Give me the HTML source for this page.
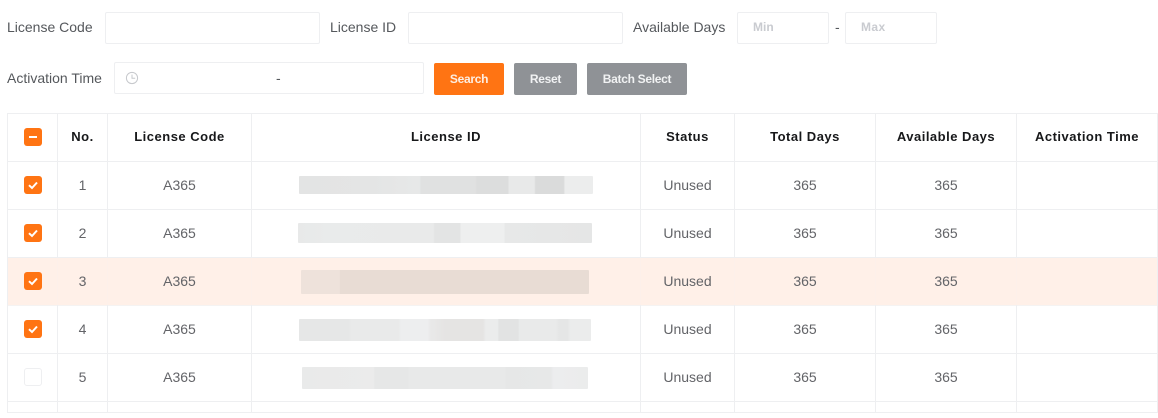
<!DOCTYPE html>
<html>
<head>
<meta charset="utf-8">
<style>
html,body{margin:0;padding:0;background:#fff;}
#p{position:relative;width:1158px;height:418px;overflow:hidden;font-family:"Liberation Sans",Arial,sans-serif;font-size:14px;color:#5f6266;background:#fff;}
#p div{position:absolute;box-sizing:border-box;}
.l{white-space:nowrap;line-height:20px;height:20px;color:#55585c;}
.i{border:1px solid #eeeff1;border-radius:2px;background:#fff;}
.b{border-radius:2px;font-size:12px;font-weight:bold;letter-spacing:-.3px;text-align:center;line-height:32px;height:32px;top:63px;background:#8f9296;color:#f1f2f3;}
.ph{color:#c9cbd0;font-size:12px;font-weight:bold;line-height:20px;white-space:nowrap;}
.h{background:#eeeff1;}
.th{top:127px;height:20px;line-height:20px;text-align:center;font-weight:bold;font-size:13px;letter-spacing:.5px;color:#17181a;white-space:nowrap;}
.td{height:20px;line-height:20px;text-align:center;color:#636468;white-space:nowrap;}
.cb{left:24px;width:18px;height:18px;border-radius:3px;background:#ff7413;}
.cb svg{position:absolute;left:0;top:0;}
.bar{border-radius:1px;}
</style>
</head>
<body>
<div id="p">
<div class="l" style="left:7px;top:17px;">License Code</div>
<div class="i" style="left:105px;top:12px;width:215px;height:32px;"></div>
<div class="l" style="left:330px;top:17px;">License ID</div>
<div class="i" style="left:408px;top:12px;width:215px;height:32px;"></div>
<div class="l" style="left:633px;top:17px;">Available Days</div>
<div class="i" style="left:737px;top:12px;width:92px;height:32px;"></div>
<div class="ph" style="left:753px;top:17px;">Min</div>
<div class="l" style="left:835px;top:17px;">-</div>
<div class="i" style="left:845px;top:12px;width:92px;height:32px;"></div>
<div class="ph" style="left:861px;top:17px;letter-spacing:.4px;">Max</div>

<div class="l" style="left:7px;top:68px;">Activation Time</div>
<div class="i" style="left:114px;top:62px;width:310px;height:32px;"></div>
<svg style="position:absolute;left:125px;top:71px;" width="14" height="14" viewBox="0 0 14 14" fill="none" stroke="#c6c8cc" stroke-width="1"><circle cx="7" cy="7" r="5.6"/><path d="M7 3.6V7.3H10.2"/></svg>
<div class="l" style="left:276px;top:68px;">-</div>
<div class="b" style="left:434px;width:70px;background:#ff7413;color:#fdeee2;">Search</div>
<div class="b" style="left:514px;width:63px;">Reset</div>
<div class="b" style="left:587px;width:100px;">Batch Select</div>

<!-- row highlight -->
<div style="left:8px;top:258px;width:1149px;height:47px;background:#fff0e8;"></div>

<!-- horizontal lines -->
<div class="h" style="left:7px;top:113px;width:1151px;height:1px;"></div>
<div class="h" style="left:7px;top:161px;width:1151px;height:1px;"></div>
<div class="h" style="left:7px;top:209px;width:1151px;height:1px;"></div>
<div class="h" style="left:7px;top:257px;width:1151px;height:1px;"></div>
<div class="h" style="left:7px;top:305px;width:1151px;height:1px;background:#f5f3f2;"></div>
<div class="h" style="left:7px;top:353px;width:1151px;height:1px;"></div>
<div class="h" style="left:7px;top:401px;width:1151px;height:1px;"></div>
<div class="h" style="left:7px;top:412px;width:1151px;height:1px;"></div>

<!-- vertical lines -->
<div class="h" style="left:7px;top:113px;width:1px;height:300px;"></div>
<div class="h" style="left:57px;top:113px;width:1px;height:300px;"></div>
<div class="h" style="left:107px;top:113px;width:1px;height:300px;"></div>
<div class="h" style="left:251px;top:113px;width:1px;height:300px;"></div>
<div class="h" style="left:640px;top:113px;width:1px;height:300px;"></div>
<div class="h" style="left:734px;top:113px;width:1px;height:300px;"></div>
<div class="h" style="left:875px;top:113px;width:1px;height:300px;"></div>
<div class="h" style="left:1016px;top:113px;width:1px;height:300px;"></div>
<div class="h" style="left:1157px;top:113px;width:1px;height:300px;"></div>
<!-- highlight column tint -->
<div style="left:57px;top:258px;width:1px;height:47px;background:#fdf0ea;"></div>
<div style="left:107px;top:258px;width:1px;height:47px;background:#fdf0ea;"></div>
<div style="left:251px;top:258px;width:1px;height:47px;background:#fdf0ea;"></div>
<div style="left:640px;top:258px;width:1px;height:47px;background:#fdf0ea;"></div>
<div style="left:734px;top:258px;width:1px;height:47px;background:#fdf0ea;"></div>
<div style="left:875px;top:258px;width:1px;height:47px;background:#fdf0ea;"></div>
<div style="left:1016px;top:258px;width:1px;height:47px;background:#fdf0ea;"></div>

<!-- header -->
<div class="cb" style="top:128px;"><svg width="18" height="18"><path d="M5 9H13" stroke="#fff" stroke-width="2"/></svg></div>
<div class="th" style="left:58px;width:49px;">No.</div>
<div class="th" style="left:108px;width:143px;">License Code</div>
<div class="th" style="left:252px;width:388px;">License ID</div>
<div class="th" style="left:641px;width:93px;">Status</div>
<div class="th" style="left:735px;width:140px;">Total Days</div>
<div class="th" style="left:876px;width:140px;">Available Days</div>
<div class="th" style="left:1017px;width:140px;">Activation Time</div>

<!-- checkboxes -->
<div class="cb" style="top:176px;"><svg width="18" height="18" fill="none"><path d="M5 9.2L8 12L13 6.5" stroke="#fff" stroke-width="2"/></svg></div>
<div class="cb" style="top:224px;"><svg width="18" height="18" fill="none"><path d="M5 9.2L8 12L13 6.5" stroke="#fff" stroke-width="2"/></svg></div>
<div class="cb" style="top:272px;"><svg width="18" height="18" fill="none"><path d="M5 9.2L8 12L13 6.5" stroke="#fff" stroke-width="2"/></svg></div>
<div class="cb" style="top:320px;"><svg width="18" height="18" fill="none"><path d="M5 9.2L8 12L13 6.5" stroke="#fff" stroke-width="2"/></svg></div>
<div class="cb" style="top:368px;background:#fff;border:1px solid #eeeff1;"></div>

<!-- row 1 -->
<div class="td" style="left:58px;width:49px;top:175px;">1</div>
<div class="td" style="left:108px;width:143px;top:175px;">A365</div>
<div class="bar" style="left:299px;top:176px;width:294px;height:18px;background:linear-gradient(90deg,#e3e4e4 0,#e4e5e5 25%,#e7e8e8 40%,#e7e8e8 41%,#e0e1e1 41.5%,#e0e1e1 60%,#dcdddd 60.5%,#dcdddd 71%,#e8e9e9 71.5%,#e8e9e9 80%,#dadbdb 80.5%,#dadbdb 90%,#eceded 90.5%,#eceded 100%);"></div>
<div class="td" style="left:641px;width:93px;top:175px;">Unused</div>
<div class="td" style="left:735px;width:140px;top:175px;">365</div>
<div class="td" style="left:876px;width:140px;top:175px;">365</div>

<!-- row 2 -->
<div class="td" style="left:58px;width:49px;top:223px;">2</div>
<div class="td" style="left:108px;width:143px;top:223px;">A365</div>
<div class="bar" style="left:298px;top:223px;width:294px;height:20px;background:linear-gradient(90deg,#e8e9e9 0,#e9ebeb 10%,#e9eaea 46%,#e3e4e4 46.5%,#e3e4e4 55%,#eeefef 55.5%,#eeefef 70%,#e7e8e8 70.5%,#e5e6e6 100%);"></div>
<div class="td" style="left:641px;width:93px;top:223px;">Unused</div>
<div class="td" style="left:735px;width:140px;top:223px;">365</div>
<div class="td" style="left:876px;width:140px;top:223px;">365</div>

<!-- row 3 -->
<div class="td" style="left:58px;width:49px;top:271px;">3</div>
<div class="td" style="left:108px;width:143px;top:271px;">A365</div>
<div class="bar" style="left:301px;top:270px;width:288px;height:24px;background:linear-gradient(90deg,#eee2db 0,#eee2db 13.4%,#e8dcd4 13.6%,#e8dcd4 100%);"></div>
<div class="td" style="left:641px;width:93px;top:271px;">Unused</div>
<div class="td" style="left:735px;width:140px;top:271px;">365</div>
<div class="td" style="left:876px;width:140px;top:271px;">365</div>

<!-- row 4 -->
<div class="td" style="left:58px;width:49px;top:319px;">4</div>
<div class="td" style="left:108px;width:143px;top:319px;">A365</div>
<div class="bar" style="left:299px;top:319px;width:292px;height:22px;background:linear-gradient(90deg,#e6e7e7 0,#e6e7e7 17%,#e9eaea 18%,#e9eaea 34%,#edeeef 35%,#edeeef 44%,#e9e9e9 45%,#e5e4e3 50%,#e5e4e3 63%,#ebecec 64%,#ebecec 68%,#e2e3e3 68.5%,#e2e3e3 75%,#e9eaea 75.5%,#e9eaea 88%,#e5e6e6 89%,#e5e6e6 92%,#ebecec 93%,#ebecec 100%);"></div>
<div class="td" style="left:641px;width:93px;top:319px;">Unused</div>
<div class="td" style="left:735px;width:140px;top:319px;">365</div>
<div class="td" style="left:876px;width:140px;top:319px;">365</div>

<!-- row 5 -->
<div class="td" style="left:58px;width:49px;top:367px;">5</div>
<div class="td" style="left:108px;width:143px;top:367px;">A365</div>
<div class="bar" style="left:302px;top:367px;width:286px;height:22px;background:linear-gradient(90deg,#e9eaea 0,#ebebeb 25%,#e6e7e7 25.5%,#e6e7e7 37%,#e8e9e9 37.5%,#e8e9e9 71%,#e6e7e7 71.5%,#e7e8e8 87%,#ecedee 88%,#ebecec 100%);"></div>
<div class="td" style="left:641px;width:93px;top:367px;">Unused</div>
<div class="td" style="left:735px;width:140px;top:367px;">365</div>
<div class="td" style="left:876px;width:140px;top:367px;">365</div>
</div>
</body>
</html>
